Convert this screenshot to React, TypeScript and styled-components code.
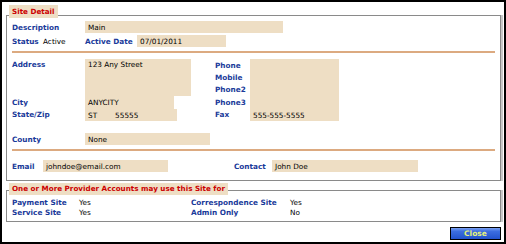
import React from "react";
import styled, { createGlobalStyle } from "styled-components";

const Global = createGlobalStyle`
  html, body { margin: 0; padding: 0; background: #fff; }
  body { font-family: "DejaVu Sans", Verdana, sans-serif; font-size: 7.3px; }
  * { box-sizing: border-box; }
`;

const Frame = styled.div`
  width: 506px;
  height: 244px;
  border: 2px solid #000;
  background: #fff;
  display: flex;
  flex-direction: column;
  padding: 13px 0 0 4px;
`;

const Group = styled.section<{ $top?: number; $pt: number; $pb: number }>`
  position: relative;
  width: 495px;
  margin-top: ${(p) => p.$top ?? 0}px;
  border: 1px solid #8a8a8a;
  box-shadow: 2px 0 0 #c8c8c8;
  padding: ${(p) => p.$pt}px 5px ${(p) => p.$pb}px 5px;
  display: flex;
  flex-direction: column;
`;

const Caption = styled.div<{ $top: number; $h: number }>`
  position: absolute;
  left: 2px;
  top: ${(p) => p.$top}px;
  height: ${(p) => p.$h}px;
  line-height: ${(p) => p.$h}px;
  padding: 0 3px;
  background: #eedec4;
  color: #cc0000;
  font-weight: bold;
  font-size: 7.2px;
  white-space: nowrap;
`;

const Row = styled.div<{ $mt?: number; $h?: number }>`
  display: flex;
  align-items: center;
  height: ${(p) => p.$h ?? 12}px;
  margin-top: ${(p) => p.$mt ?? 0}px;
`;

const Label = styled.span<{ $w?: number }>`
  color: #1a3a9a;
  font-weight: bold;
  white-space: nowrap;
  ${(p) => (p.$w !== undefined ? `width: ${p.$w}px; flex: none;` : "")}
`;

const Value = styled.span<{ $w?: number }>`
  color: #000;
  white-space: nowrap;
  ${(p) => (p.$w !== undefined ? `width: ${p.$w}px; flex: none;` : "")}
`;

const Field = styled.div<{ $w: number; $h?: number; $align?: string }>`
  width: ${(p) => p.$w}px;
  height: ${(p) => p.$h ?? 12}px;
  flex: none;
  background: #eedec4;
  color: #000;
  padding: 0 3px;
  display: flex;
  align-items: ${(p) => p.$align ?? "center"};
  white-space: nowrap;
`;

const Separator = styled.div<{ $mt: number }>`
  height: 2px;
  margin-top: ${(p) => p.$mt}px;
  background: #dcaa80;
`;

const AddressBlock = styled.div`
  display: flex;
  margin-top: 6px;
  gap: 24px;
`;

const AddrGrid = styled.div`
  display: grid;
  grid-template-columns: 73px 106px;
  grid-template-rows: 37px 13px 12px;
`;

const AddrLabel = styled(Label)<{ $start?: boolean }>`
  display: flex;
  align-items: ${(p) => (p.$start ? "flex-start" : "center")};
  line-height: 12px;
`;

const PhoneBlock = styled.div`
  display: flex;
  height: 62px;
`;

const PhoneLabels = styled.div`
  width: 35px;
  display: grid;
  grid-template-rows: repeat(5, 1fr);
  align-items: center;
`;

const ZipText = styled.span`
  margin-left: 18px;
`;

const Opts = styled.div`
  display: grid;
  grid-template-columns: 67px 112px 99px 1fr;
  grid-auto-rows: 10px;
  align-items: center;
`;

const Footer = styled.div`
  display: flex;
  justify-content: flex-end;
  width: 495px;
  margin-top: 5px;
`;

const CloseButton = styled.button`
  width: 51px;
  height: 13px;
  padding: 0;
  border: 1px solid #000;
  background: linear-gradient(#7aa0f0 0%, #3c6ee0 30%, #2252cc 100%);
  color: #e6f27a;
  font-family: "DejaVu Sans", Verdana, sans-serif;
  font-size: 7.5px;
  font-weight: bold;
  line-height: 11px;
  cursor: pointer;
`;

export default function App() {
  return (
    <>
      <Global />
      <Frame>
        <Group $pt={5} $pb={8}>
          <Caption $top={-11} $h={13}>Site Detail</Caption>
          <Row>
            <Label $w={73}>Description</Label>
            <Field $w={198}>Main</Field>
          </Row>
          <Row $mt={2}>
            <Label $w={31}>Status</Label>
            <Value $w={42}>Active</Value>
            <Label $w={52}>Active Date</Label>
            <Field $w={89}>07/01/2011</Field>
          </Row>
          <Separator $mt={4} />
          <AddressBlock>
            <AddrGrid>
              <AddrLabel $start>Address</AddrLabel>
              <Field $w={106} $h={37} $align="flex-start" style={{ paddingTop: 1 }}>
                123 Any Street
              </Field>
              <AddrLabel>City</AddrLabel>
              <Field $w={89} $h={13}>ANYCITY</Field>
              <AddrLabel>State/Zip</AddrLabel>
              <Field $w={92}>
                ST<ZipText>55555</ZipText>
              </Field>
            </AddrGrid>
            <PhoneBlock>
              <PhoneLabels>
                <Label>Phone</Label>
                <Label>Mobile</Label>
                <Label>Phone2</Label>
                <Label>Phone3</Label>
                <Label>Fax</Label>
              </PhoneLabels>
              <Field $w={89} $h={62} $align="flex-end" style={{ paddingBottom: 1 }}>
                555-555-5555
              </Field>
            </PhoneBlock>
          </AddressBlock>
          <Row $mt={12}>
            <Label $w={73}>County</Label>
            <Field $w={125}>None</Field>
          </Row>
          <Separator $mt={4} />
          <Row $mt={9}>
            <Label $w={31}>Email</Label>
            <Field $w={125}>johndoe@email.com</Field>
            <Label $w={38} style={{ marginLeft: 66 }}>Contact</Label>
            <Field $w={146}>John Doe</Field>
          </Row>
        </Group>
        <Group $top={9} $pt={6} $pb={4}>
          <Caption $top={-8} $h={12}>One or More Provider Accounts may use this Site for</Caption>
          <Opts>
            <Label>Payment Site</Label>
            <Value>Yes</Value>
            <Label>Correspondence Site</Label>
            <Value>Yes</Value>
            <Label>Service Site</Label>
            <Value>Yes</Value>
            <Label>Admin Only</Label>
            <Value>No</Value>
          </Opts>
        </Group>
        <Footer>
          <CloseButton>Close</CloseButton>
        </Footer>
      </Frame>
    </>
  );
}
